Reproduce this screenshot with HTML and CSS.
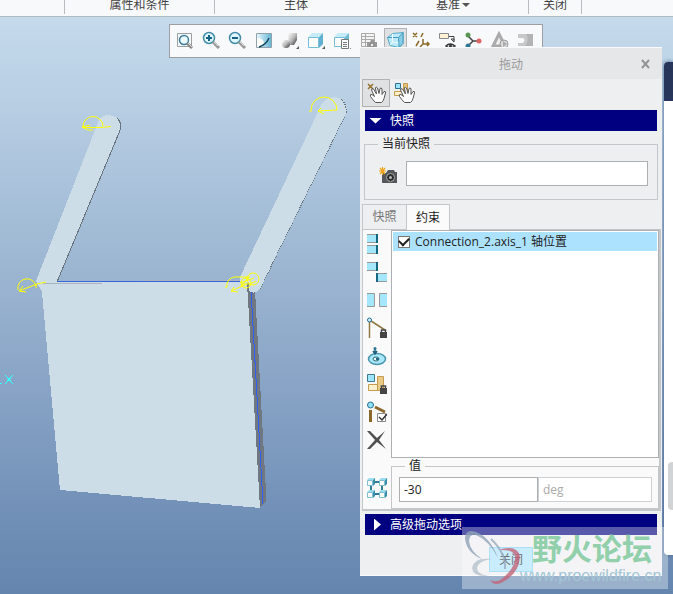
FILE: index.html
```html
<!DOCTYPE html>
<html lang="zh-CN">
<head>
<meta charset="utf-8">
<title>拖动</title>
<link rel="stylesheet" href="styles.css">
</head>
<body>
<header class="ribbon">
  <span></span><span>属性和条件</span><span>主体</span><span>基准<i class="caret"></i></span><span>关闭</span><span></span>
</header>
<main class="workspace">
  <svg class="model" viewBox="0 17 360 577" width="360" height="577" aria-hidden="true">
    <g shape-rendering="crispEdges">
      <path fill="#6f7880" d="M246 285 L255 290 L266 492 V501 L260 508 Z"/>
      <path fill="#ccdde7" d="M36 281 L97 125 Q99 115 109 115 Q120 116 121 127 L57 282 H247 L260 508 L60 490 L42 292 Z"/>
      <path fill="none" stroke="#69757e" d="M117 118 Q121 122 121 128 L57 282"/>
      <path stroke="#a9b4be" d="M143 280.500H240M43 283.500H102"/>
      <path stroke="#3865dc" d="M57 281.500H240"/>
      <path fill="none" stroke="#315ff5" d="M251 290 L263 504"/>
      <path fill="#ccdde7" d="M240 277 L318 112 Q322 97 336 97 Q346 99 347 111 L260 289 Q254 295 249 291 Q245 286 240 284 Z"/>
      <path fill="none" stroke="#69757e" stroke-dasharray="1 1" d="M341 99 Q347 104 346 114 L260 289"/>
      <path stroke="#6f7880" stroke-width="2" d="M248 283V292"/>
    </g>
    <g fill="none" stroke="#ff0">
      <path d="M83 127 A10 10 0 0 1 103 126M82 127.500H100L111 126.500M90 125L82 127L88 130H93"/>
      <path d="M18 290 A9 9 0 1 1 36 286M19 291L37 284L46 282M23 286L19 291L26 292M36 284V288"/>
      <path d="M309 111H312M311 110 A12 12 0 0 1 337 110M318 111L337 110M321 108L318 111L324 114"/>
      <path d="M225 287H227V283Q230 276 238 277H250M231 291L247 284M234 287L231 291L238 292M240 283L254 278"/>
      <circle cx="253" cy="279" r="6"/><circle cx="246" cy="283" r="5"/>
      <path d="M241 286L249 277M242 284H250L256 281"/>
    </g>
    <path stroke="#3ff" shape-rendering="crispEdges" d="M0 383.500H2M5 375L13 384M13 375L5 384"/>
  </svg>

  <nav class="viewbar" aria-label="视图">
    <button aria-label="重新调整"><svg viewBox="0 0 18 18"><path fill="#f8fafb" stroke="#989ea2" d="M1.500 2.500h14v13h-14z"/><circle cx="8" cy="9" r="4.500" fill="#edfaff" stroke="#387c9a" stroke-width="1.500"/><path stroke="#888" stroke-width="3" d="M11 12l5 5"/><path stroke="#ddd" d="M12 12l4 4"/></svg></button>
    <button aria-label="放大"><svg viewBox="0 0 18 18"><circle cx="7" cy="7" r="5.500" fill="#dff6ff" stroke="#458ca9" stroke-width="1.500"/><path stroke="#146287" stroke-width="2" d="M4 7h6M7 4v6"/><path stroke="#999" stroke-width="3" d="M11 11l6 6"/><path stroke="#ddd" d="M12 11l4 4"/></svg></button>
    <button aria-label="缩小"><svg viewBox="0 0 18 18"><circle cx="7" cy="7" r="5.500" fill="#dff6ff" stroke="#458ca9" stroke-width="1.500"/><path stroke="#146287" stroke-width="2" d="M4 7h6"/><path stroke="#999" stroke-width="3" d="M11 11l6 6"/><path stroke="#ddd" d="M12 11l4 4"/></svg></button>
    <button aria-label="重画"><svg viewBox="0 0 18 18"><defs><linearGradient id="sky" x2="1"><stop stop-color="#e8f8fc"/><stop offset="1" stop-color="#62b4d4"/></linearGradient></defs><path fill="url(#sky)" stroke="#91a1aa" d="M1.500 2.500h15v14h-15z"/><path fill="#fff" d="M2 7Q8 7 9 12L5 16H2z"/><path stroke="#14465c" stroke-width="1.500" d="M4 16Q11 14 14 7"/></svg></button>
    <button aria-label="渲染"><svg viewBox="0 0 18 18"><defs><linearGradient id="metal" x2="1" y2="1"><stop stop-color="#fff"/><stop offset=".5" stop-color="#bbb"/><stop offset="1" stop-color="#333"/></linearGradient></defs><path fill="url(#metal)" d="M7 3l2-1h7v7l-3 5H8z"/><circle cx="5" cy="13" r="4" fill="url(#metal)"/><path fill="#555" d="M18 15v3h-3z"/></svg></button>
    <button aria-label="显示样式"><svg viewBox="0 0 18 18"><path fill="#c6ecf8" d="M1 6l4-4h11l-4 4z"/><path fill="#5fb1cf" d="M12 6l4-4v11l-4 4z"/><path fill="#fff" stroke="#75bdd8" d="M1.500 6.500h10v10h-10z"/><path fill="#555" d="M18 15v3h-3z"/></svg></button>
    <button aria-label="已保存方向"><svg viewBox="0 0 18 18"><path fill="#c6ecf8" d="M1 6l4-4h11l-4 4z"/><path fill="#70bbd4" d="M12 6l4-4v7h-4z"/><path fill="#fff" stroke="#75bdd8" d="M1.500 6.500h10v9h-10z"/><path fill="#fff" stroke="#777" d="M8.500 8.500h7v9h-7zM10 11.500h4M10 13.500h4M10 15.500h4"/><path fill="#555" d="M19 15v3h-2z"/></svg></button>
    <button aria-label="视图管理器"><svg viewBox="0 0 18 18"><path fill="#f4f4f4" stroke="#aaa" d="M1.500 2.500h13v13h-13zM1 5.500h13M1 8.500h13M1 11.500h13M5.500 3v12"/><path fill="#999" d="M7 11h3l1-2h3l1 2h2v7H7z"/><circle cx="12" cy="14" r="2" fill="#eee" stroke="#777"/></svg></button>
    <button class="on" aria-label="透视图"><svg viewBox="0 0 18 18"><path fill="#bceafa" stroke="#55a9c8" d="M1.500 6.500L7 2.500l10-1v11l-4 4-9-2z"/><path fill="#86cfe7" stroke="#439bbc" d="M12.500 6.500l4.500-5v11l-4 4z"/><path stroke="#439bbc" d="M1.500 6.500h11"/><path stroke="#eefaff" d="M6.500 3v8l6 1M4 14l3-3"/></svg></button>
    <button aria-label="基准显示"><svg viewBox="0 0 18 18"><path stroke="#8b6a27" stroke-width="1.500" d="M1 2l4 4m0-4L1 6M11 2L9 6M7 10l-3 5M11 8v5h6M15 11l2 2-2 2M11 13l-3 3"/></svg></button>
    <button aria-label="注释显示"><svg viewBox="0 0 18 18"><path fill="#fff3d5" stroke="#888" d="M1.500 2.500h9v5h-9z"/><path stroke="#444" d="M11 5.500h5v4M13 8l3 3V8z"/><path fill="#fff" stroke="#333" stroke-width="1.500" d="M8 15q4-4 9 0-5 4-9 0z"/><circle cx="12.500" cy="15" r="1.500" fill="#333"/></svg></button>
    <button aria-label="旋转中心"><svg viewBox="0 0 18 18"><path stroke="#444" stroke-width="1.500" d="M4 5l5 5h6M9 10l-5 5"/><circle cx="4" cy="4" r="2.500" fill="#599653"/><circle cx="4" cy="15" r="2.500" fill="#2b7897"/><circle cx="15" cy="10" r="2.500" fill="#dc6464"/></svg></button>
    <button aria-label="仿真"><svg viewBox="0 0 18 18"><path fill="#eee" stroke="#aaa" stroke-width="3" d="M8 3l6 12H2z"/><circle cx="13" cy="13" r="4" fill="#ddd" stroke="#999"/><path fill="#aaa" d="M12 10l4 3-4 3z"/></svg></button>
    <button aria-label="结果"><svg viewBox="0 0 18 18"><path fill="#c8c8c8" d="M1 3h15v12H1v-3h5q3-3 0-5H1z"/><path fill="#b3b3b3" d="M9 3h7v12H8q5-6 1-12z"/></svg></button>
  </nav>

  <aside class="behind"><div class="behind-head"></div><div class="behind-thumb"></div></aside>

  <section class="dialog" role="dialog" aria-label="拖动">
    <header class="title"><h1>拖动</h1><button aria-label="关闭窗口"><svg viewBox="0 0 10 10"><path stroke="#929496" stroke-width="2" d="M1 1l7 8M8 1L1 9"/></svg></button></header>
    <div class="modes">
      <button class="on" aria-label="点拖动"><svg viewBox="0 0 24 24"><path stroke="#94702d" stroke-width="1.500" d="M4 3l5 5m0-5L4 8"/><path class="hand" d="M11.500 21.500Q9 19 6.500 15.500Q5.500 13 8 13.500L10.500 15.500L7.500 9Q7.500 7 9.500 8L12.500 13L11.500 7Q12 5 13.500 7L15 12.500L16 7.500Q17.300 6 18 8L18 13.500L20 10.500Q22 10 21.500 12L20 17.500Q19.500 20 17.500 21.500Z"/></svg></button>
      <button aria-label="主体拖动"><svg viewBox="0 0 24 24"><path fill="#9de5fb" stroke="#346f89" d="M3.500 2.500h5v5h-5z"/><path fill="#e4c57d" stroke="#c79b4b" d="M11.500 2.500h4v8h-4z"/><path fill="#fff1cb" stroke="#c79b4b" d="M2.500 10.500h8v4h-8z"/><path class="hand" d="M12.500 21.500Q10 19 7.500 15.500Q6.500 13 9 13.500L11.500 15.500L8.500 9Q8.500 7 10.500 8L13.500 13L12.500 7Q13 5 14.500 7L16 12.500L17 7.500Q18.300 6 19 8L19 13.500L21 10.500Q23 10 22.500 12L21 17.500Q20.500 20 18.500 21.500Z"/></svg></button>
    </div>
    <button class="bar"><i class="down"></i>快照</button>
    <fieldset class="snapshot">
      <legend>当前快照</legend>
      <button class="camera" aria-label="拍照"><svg viewBox="0 0 20 18"><path fill="#55585a" d="M3 6h4l2-3h6l1 2h2v11H3z"/><circle cx="11.500" cy="10.500" r="4" fill="#292b2c" stroke="#aaa"/><circle cx="11.500" cy="10.500" r="1.500" fill="#bbb"/><path stroke="#eda51e" stroke-width="1.200" d="M3.500 0v8M0 4h7M1 1l5 6M6 1L1 7"/></svg></button>
      <input type="text" aria-label="快照名称">
    </fieldset>
    <div class="tabs" role="tablist"><button role="tab">快照</button><button role="tab" aria-selected="true" class="active">约束</button></div>
    <div class="panel">
      <div class="tools">
        <button aria-label="对齐两个图元"><svg viewBox="0 0 20 22"><path class="plate" d="M0 1.500h10v8H0M0 12.500h10v8H0"/><path class="edge" d="M10 1v9M10 12v9"/></svg></button>
        <button aria-label="配对两个图元"><svg viewBox="0 0 20 22"><path class="plate" d="M0 1.500h10v8H0M20 12.500H10v8h10"/><path class="edge" d="M10 1v9M10 12v9"/></svg></button>
        <button aria-label="定向两个曲面"><svg viewBox="0 0 20 22"><path class="plate" d="M0 4.500h7.500v13H0M20 4.500h-7.500v13H20"/></svg></button>
        <button aria-label="运动轴约束"><svg viewBox="0 0 20 22"><path stroke="#927743" stroke-width="1.500" d="M2.500 21V3L18 13"/><circle cx="2.500" cy="3" r="2" fill="#cff4ff" stroke="#216e8f"/><path class="lock" d="M13 15h7v6h-7z"/><path class="shackle" d="M14.500 15v-2h4v2"/></svg></button>
        <button aria-label="凸轮约束"><svg viewBox="0 0 20 22"><ellipse cx="10" cy="14" rx="8.500" ry="5.500" fill="#a9e7f9" stroke="#4794ae" stroke-width="1.500"/><ellipse cx="9" cy="14" rx="3" ry="2" fill="#effbff" stroke="#286a83"/><path fill="#286a83" d="M9 13h3v2H9z"/><path stroke="#1f6180" stroke-width="1.500" d="M8 3v6M6 6l2 3 2-3"/><circle cx="8" cy="3.500" r="1.500" fill="#2c7795"/></svg></button>
        <button aria-label="主体锁定"><svg viewBox="0 0 20 22"><path fill="#9fe5fb" stroke="#3e7a93" d="M.5 1.500h7v7h-7z"/><path fill="#e9cb87" stroke="#c69b4e" d="M10.500 3.500h6v14h-6z"/><path fill="#fff0ce" stroke="#c69b4e" d="M1.500 11.500h9v6h-9z"/><path class="lock" d="M13 15h7v6h-7z"/><path class="shackle" d="M14.500 15v-2h4v2"/></svg></button>
        <button aria-label="启用断开连接"><svg viewBox="0 0 20 22"><path stroke="#8d672c" stroke-width="3" d="M3.500 21V9M8 6l10 5"/><circle cx="3.500" cy="4" r="3" fill="#91e1f9" stroke="#28738f"/><path fill="#fff" stroke="#888" d="M10.500 12.500h8v8h-8z"/><path stroke="#333" stroke-width="1.500" d="M12 16l3 3 5-6"/></svg></button>
        <button aria-label="删除约束"><svg viewBox="0 0 20 22"><path fill="#505050" d="M0 2h3l7 7 8-7-6 9 7 9-9-7-7 7H0l8-9z"/></svg></button>
      </div>
      <div class="list"><label><input type="checkbox" checked><span>Connection_2.axis_1 轴位置</span></label></div>
      <button class="assemble" aria-label="装配"><svg viewBox="0 0 20 22"><path stroke="#317b9a" stroke-width="2" d="M4 8v7M15 8v7M7 5h5M7 17h5"/><g fill="#fff" stroke="#82bdd0"><path d="M.5 3.500h5v5h-5zM12.500 3.500h5v5h-5zM.5 15.500h5v5h-5zM12.500 15.500h5v5h-5z"/></g><path fill="#9bdcf0" d="M0 3l2-2h6L6 3zM12 3l2-2h6l-2 2zM0 15l2-2h6l-2 2zM12 15l2-2h6l-2 2z"/><path fill="#3d8dad" d="M6 3l2-2v6L6 9zM18 3l2-2v6l-2 2zM6 15l2-2v6l-2 2zM18 15l2-2v6l-2 2z"/></svg></button>
      <fieldset class="value"><legend>值</legend><input type="text" value="-30" aria-label="值"><input type="text" value="deg" aria-label="单位" disabled></fieldset>
    </div>
    <button class="bar"><i class="right"></i>高级拖动选项</button>
    <button class="close">关闭</button>
  </section>

  <div class="watermark">
    <svg viewBox="0 0 60 62" aria-hidden="true"><path fill="#8fa4b8" d="M36 31Q28 10 14 5Q3 1 3 12Q5 26 20 32Q8 24 7 14Q8 5 16 9Q27 14 36 31z"/><path fill="#b6c3cd" d="M30 32Q12 30 10 41Q11 50 26 49Q15 47 15 41Q16 34 30 32z"/><path fill="#c36579" d="M36 23Q56 17 58 30Q57 45 44 53Q33 61 28 53Q36 57 43 49Q54 39 53 29Q51 22 36 23z"/><path stroke="#9aabbd" stroke-width="2" d="M29 12Q44 26 43 42"/></svg>
    <strong>野火论坛</strong>
    <span>www.proewildfire.cn</span>
  </div>
</main>
</body>
</html>
```
FILE: styles.css
```css
* { box-sizing: border-box; }
body {
  margin: 0;
  min-height: 100vh;
  display: flex;
  flex-direction: column;
  font: 12px/18px "Open Sans", "Noto Sans CJK SC", sans-serif;
  color: #222;
  overflow: hidden;
}
button, input { font: inherit; color: inherit; margin: 0; }
button { border: 0; background: none; padding: 0; }
svg { display: block; fill: none; }
fieldset { margin: 0; min-width: 0; border: 1px solid #c3c7ca; }

.ribbon {
  height: 17px;
  display: grid;
  grid-template-columns: 65px 150px 163px 151px 53px 1fr;
  background: #f8f9fb;
  border-bottom: 1px solid #aeb9c0;
  overflow: hidden;
  color: #444;
}
.ribbon span {
  height: 14px;
  display: flex;
  align-items: center;
  justify-content: center;
  line-height: 20px;
  padding-bottom: 5px;
  border-right: 1px solid #b8bcbf;
}
.ribbon span:last-child { border: 0; }
.caret { border: 4px solid transparent; border-top-color: #555; border-bottom: 0; margin-left: 2px; }

.workspace {
  position: relative;
  flex: 1;
  background: linear-gradient(#c5daeb, #b8cfe4 14%, #98b2cf 48%, #7a97bd 78%, #6485ae);
}
.model { position: absolute; left: 0; top: 0; }

.viewbar {
  position: absolute;
  left: 169px;
  top: 7px;
  width: 374px;
  display: flex;
  justify-content: space-between;
  padding: 3px 4px 5px;
  background: #f8f9fb;
  border: 1px solid #9c9fa2;
}
.viewbar button { width: 23px; height: 24px; padding: 2px; }
.viewbar svg { width: 18px; height: 18px; }
.viewbar .on, .modes .on { background: #e0e1e3; border: 1px solid #b0b2b4; }
.viewbar .on { padding: 1px; }

.behind {
  position: absolute;
  right: 0;
  top: 45px;
  bottom: 39px;
  width: 9px;
  background: #fff;
  border-radius: 4px 0 0 4px;
  overflow: hidden;
  box-shadow: 0 0 4px #44608a;
}
.behind-head { height: 39px; background: #28355a; }
.behind-thumb { margin: 361px 0 0 4px; height: 48px; background: #d2d3d4; border-radius: 4px 0 0 4px; }

.dialog {
  position: absolute;
  right: 11px;
  top: 30px;
  width: 302px;
  display: flex;
  flex-direction: column;
  padding: 0 2px 3px;
  background: #eeeff1;
  border: 1px solid #f8f9fa;
  border-width: 1px 0;
}
.title {
  position: relative;
  display: flex;
  align-items: center;
  justify-content: center;
  height: 31px;
  margin: 0 -2px;
  padding-top: 2px;
  background: #e6e7e9;
}
.title h1 { margin: 0; font: inherit; color: #999; }
.title button { position: absolute; right: 11px; top: 11px; }
.title svg { width: 10px; height: 10px; }
.modes { display: flex; height: 28px; }
.modes button { width: 28px; height: 28px; padding: 2px; }
.modes .on { padding: 1px; }
.modes svg { width: 24px; height: 24px; }
.hand { fill: #fff; stroke: #555; stroke-linejoin: round; }

.bar {
  height: 21px;
  margin: 3px 3px 0;
  padding-left: 4px;
  display: flex;
  align-items: center;
  background: #000080;
  color: #fff;
}
.bar i { width: 13px; margin-right: 8px; height: 6px; background: #fff; clip-path: polygon(0 0, 100% 0, 50% 100%); }
.bar .right { width: 7px; height: 12px; margin: 0 9px 0 5px; clip-path: polygon(0 0, 100% 50%, 0 100%); }

.snapshot {
  display: flex;
  align-items: center;
  margin: 3px 2px 0;
  padding: 9px 9px 13px 14px;
}
.snapshot legend { padding: 0 4px; line-height: 20px; margin: 0 0 -2px -1px; }
.camera svg { width: 20px; height: 18px; }
.camera { margin-right: 7px; padding-top: 4px; }
.snapshot input { flex: 1; min-width: 0; height: 25px; border: 1px solid #adb0b2; background: #fff; }

.tabs { display: flex; margin-top: 4px; height: 25px; }
.tabs button { width: 44px; border: 1px solid #c3c7ca; border-width: 1px 0 0 1px; color: #777; }
.tabs .active {
  position: relative;
  z-index: 1;
  margin-bottom: -1px;
  border-right-width: 1px;
  color: #222;
  background: #fbfbfc;
}

.panel {
  display: grid;
  grid-template-columns: 28px 1fr;
  background: #fafafb;
  border: 1px solid #c3c7ca;
  border-width: 1px 2px 2px 1px;
  margin-right: -1px;
}
.tools { display: flex; flex-direction: column; padding-bottom: 4px; }
.tools button { height: 28px; padding: 3px 4px; }
.tools svg, .assemble svg { width: 20px; height: 22px; }
.plate { fill: #a5e7fa; stroke: #999; }
.edge { stroke: #146683; stroke-width: 2; }
.lock { fill: #444; }
.shackle { fill: none; stroke: #444; stroke-width: 1.5; }
.list { background: #fff; border: 1px solid #adb0b2; padding: 1px; }
.list label {
  display: flex;
  align-items: center;
  gap: 5px;
  height: 19px;
  padding-left: 5px;
  background: #ade2ff;
  white-space: nowrap;
}
.list input {
  appearance: none;
  width: 12px;
  height: 12px;
  border: 1px solid #777;
  background: #fff;
  display: grid;
  place-items: center;
}
.list input:checked::before {
  content: "";
  width: 8px;
  height: 5px;
  border: solid #222;
  border-width: 0 0 2px 2px;
  transform: translateY(-1px) rotate(-45deg);
}
.assemble { padding: 8px 4px 0; }
.value { display: flex; padding: 3px 6px 6px 7px; }
.value legend { padding: 0 4px; margin-left: 6px; line-height: 16px; }
.value input { width: 139px; height: 25px; padding: 0 4px; border: 1px solid #adb0b2; background: #fff; }
.value input:disabled { flex: 1; min-width: 0; width: 0; border-color: #ced1d3; color: #aaa; }
.close {
  align-self: center;
  width: 44px;
  height: 25px;
  margin-top: 12px;
  background: #ade2ff;
  border: 1px solid #7fd0f5;
}

.watermark {
  position: absolute;
  right: 5px;
  bottom: 5px;
  width: 206px;
  height: 62px;
  display: grid;
  grid-template-columns: 58px 1fr;
  grid-template-rows: 40px 22px;
  background: rgb(255 255 255 / 35%);
  white-space: nowrap;
  pointer-events: none;
}
.watermark svg { grid-row: 1 / 3; width: 60px; height: 62px; opacity: .8; }
.watermark strong {
  font: 700 30px/40px "Noto Sans CJK SC", sans-serif;
  padding-left: 12px;
  color: #92d0ac;
}
.watermark span {
  font: 16px/18px "Liberation Sans", sans-serif;
  color: #a3c6d4;
}
```
